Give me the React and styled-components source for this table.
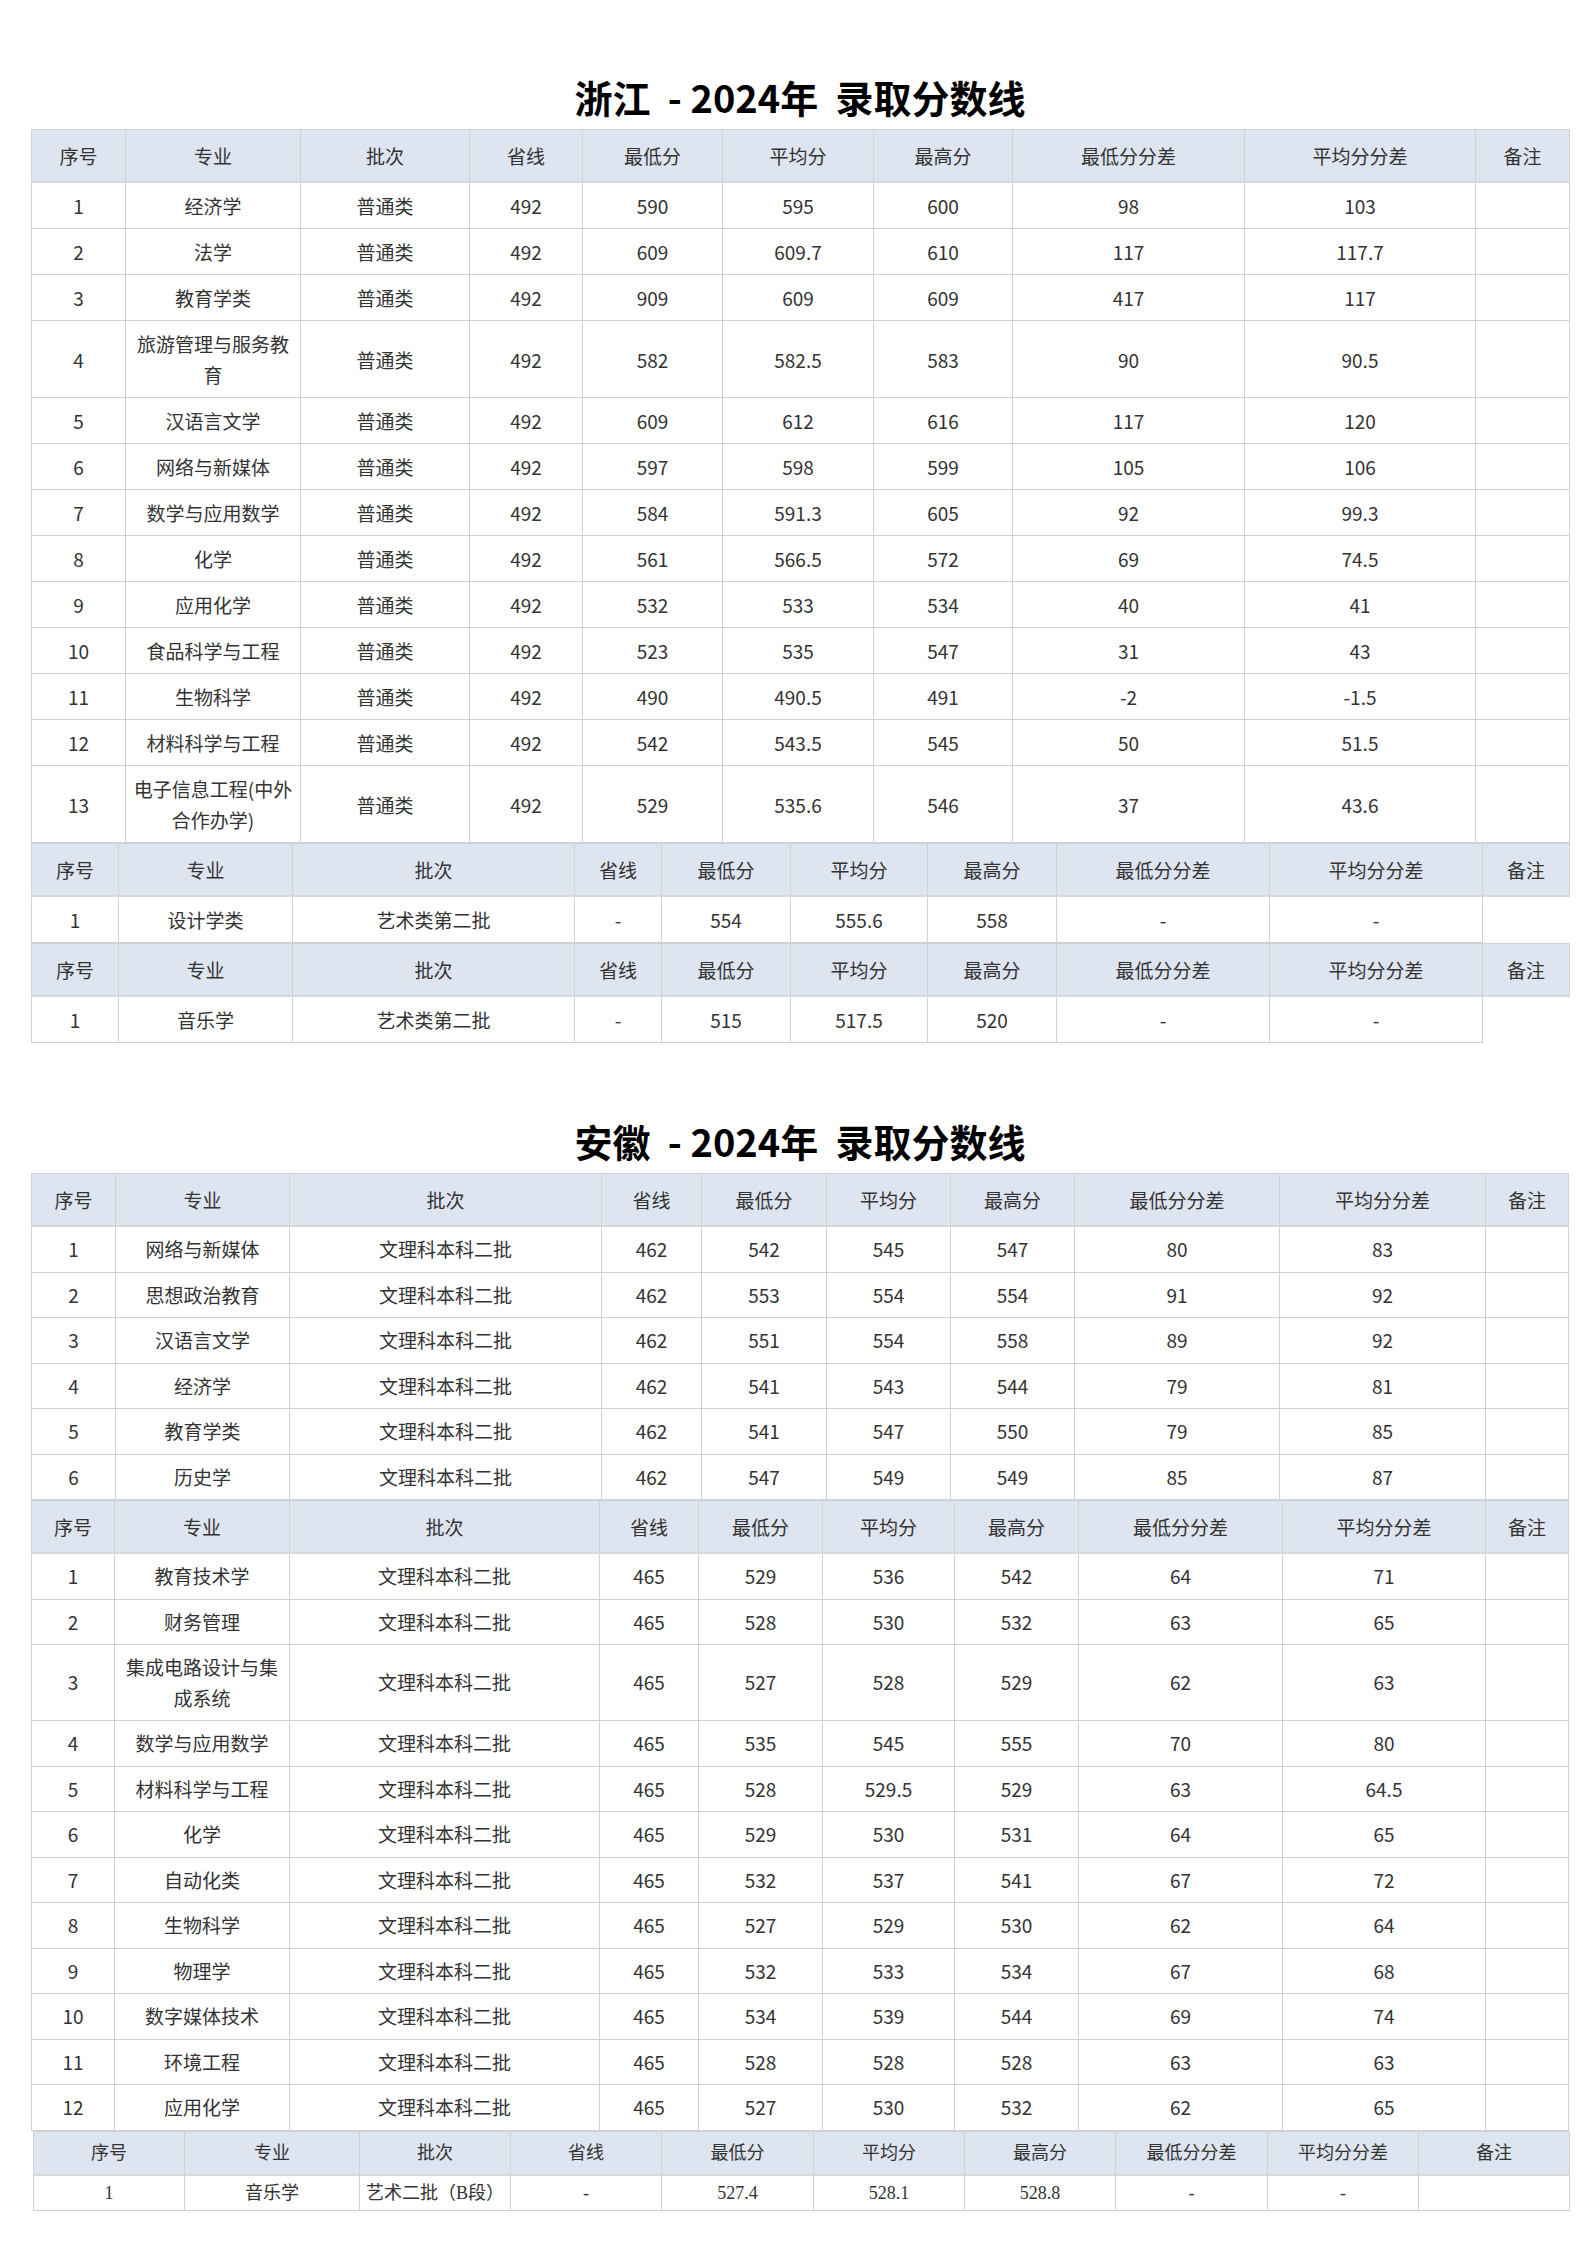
import React from 'react';
import styled, { createGlobalStyle } from 'styled-components';

const HEADERS = ['序号', '专业', '批次', '省线', '最低分', '平均分', '最高分', '最低分分差', '平均分分差', '备注'];

const zjMain = [
  ['1', '经济学', '普通类', '492', '590', '595', '600', '98', '103'],
  ['2', '法学', '普通类', '492', '609', '609.7', '610', '117', '117.7'],
  ['3', '教育学类', '普通类', '492', '909', '609', '609', '417', '117'],
  ['4', '旅游管理与服务教育', '普通类', '492', '582', '582.5', '583', '90', '90.5'],
  ['5', '汉语言文学', '普通类', '492', '609', '612', '616', '117', '120'],
  ['6', '网络与新媒体', '普通类', '492', '597', '598', '599', '105', '106'],
  ['7', '数学与应用数学', '普通类', '492', '584', '591.3', '605', '92', '99.3'],
  ['8', '化学', '普通类', '492', '561', '566.5', '572', '69', '74.5'],
  ['9', '应用化学', '普通类', '492', '532', '533', '534', '40', '41'],
  ['10', '食品科学与工程', '普通类', '492', '523', '535', '547', '31', '43'],
  ['11', '生物科学', '普通类', '492', '490', '490.5', '491', '-2', '-1.5'],
  ['12', '材料科学与工程', '普通类', '492', '542', '543.5', '545', '50', '51.5'],
  ['13', '电子信息工程(中外合作办学)', '普通类', '492', '529', '535.6', '546', '37', '43.6'],
];

const zjDesign = [['1', '设计学类', '艺术类第二批', '-', '554', '555.6', '558', '-', '-']];
const zjMusic = [['1', '音乐学', '艺术类第二批', '-', '515', '517.5', '520', '-', '-']];

const ahFirst = [
  ['1', '网络与新媒体', '文理科本科二批', '462', '542', '545', '547', '80', '83'],
  ['2', '思想政治教育', '文理科本科二批', '462', '553', '554', '554', '91', '92'],
  ['3', '汉语言文学', '文理科本科二批', '462', '551', '554', '558', '89', '92'],
  ['4', '经济学', '文理科本科二批', '462', '541', '543', '544', '79', '81'],
  ['5', '教育学类', '文理科本科二批', '462', '541', '547', '550', '79', '85'],
  ['6', '历史学', '文理科本科二批', '462', '547', '549', '549', '85', '87'],
];

const ahSecond = [
  ['1', '教育技术学', '文理科本科二批', '465', '529', '536', '542', '64', '71'],
  ['2', '财务管理', '文理科本科二批', '465', '528', '530', '532', '63', '65'],
  ['3', '集成电路设计与集成系统', '文理科本科二批', '465', '527', '528', '529', '62', '63'],
  ['4', '数学与应用数学', '文理科本科二批', '465', '535', '545', '555', '70', '80'],
  ['5', '材料科学与工程', '文理科本科二批', '465', '528', '529.5', '529', '63', '64.5'],
  ['6', '化学', '文理科本科二批', '465', '529', '530', '531', '64', '65'],
  ['7', '自动化类', '文理科本科二批', '465', '532', '537', '541', '67', '72'],
  ['8', '生物科学', '文理科本科二批', '465', '527', '529', '530', '62', '64'],
  ['9', '物理学', '文理科本科二批', '465', '532', '533', '534', '67', '68'],
  ['10', '数字媒体技术', '文理科本科二批', '465', '534', '539', '544', '69', '74'],
  ['11', '环境工程', '文理科本科二批', '465', '528', '528', '528', '63', '63'],
  ['12', '应用化学', '文理科本科二批', '465', '527', '530', '532', '62', '65'],
];

const ahMusic = [['1', '音乐学', '艺术二批（B段）', '-', '527.4', '528.1', '528.8', '-', '-']];

// column widths measured off the screenshot
const COLS_ZJ = [94, 175, 169, 113, 140, 151, 139, 232, 231, 94];
const COLS_ZJ_ART = [87, 174, 282, 87, 129, 137, 129, 213, 213, 87];
const COLS_AH1 = [84, 174, 312, 100, 125, 124, 124, 205, 206, 83];
const COLS_AH2 = [83, 175, 310, 99, 124, 132, 124, 204, 203, 83];
const COLS_AH_ART = [151, 175, 151, 151, 152, 151, 151, 152, 151, 151];

const ScoreTable = ({ cols, rows, noNote, serif, compact }) => (
  <Table $serif={serif}>
    <colgroup>
      {cols.map((w, i) => <col key={i} style={{ width: w }} />)}
    </colgroup>
    <thead>
      <tr>
        {HEADERS.map(h => <HeadCell key={h} $serif={serif}>{h}</HeadCell>)}
      </tr>
    </thead>
    <tbody>
      {rows.map(r => (
        <tr key={r[0] + r[1]}>
          {r.map((c, i) => <Cell key={i} $serif={serif} $compact={compact}>{c}</Cell>)}
          {noNote ? null : <Cell $serif={serif} $compact={compact}></Cell>}
        </tr>
      ))}
    </tbody>
  </Table>
);

const App = () => {
  return (
    <Page>
      <GlobalStyle />
      <Section>
        <Title>浙江&nbsp; - 2024年&nbsp; 录取分数线</Title>
        <ScoreTable cols={COLS_ZJ} rows={zjMain} />
        <ScoreTable cols={COLS_ZJ_ART} rows={zjDesign} noNote />
        <ScoreTable cols={COLS_ZJ_ART} rows={zjMusic} noNote />
      </Section>
      <Section $gap>
        <Title>安徽&nbsp; - 2024年&nbsp; 录取分数线</Title>
        <ScoreTable cols={COLS_AH1} rows={ahFirst} compact />
        <ScoreTable cols={COLS_AH2} rows={ahSecond} compact />
        <SerifWrap>
          <ScoreTable cols={COLS_AH_ART} rows={ahMusic} serif />
        </SerifWrap>
      </Section>
    </Page>
  );
};

export default App;

const GlobalStyle = createGlobalStyle`
  body {
    margin: 0;
    background: #fff;
    color: #333;
    font-family: "Noto Sans CJK SC", "Noto Sans", sans-serif;
  }
`;
const Page = styled.div`
  width: 1587px;
  padding: 71px 0 40px;
  box-sizing: border-box;
`;
const Section = styled.section`
  margin-left: 31px;
  width: 1538px;
  margin-top: ${p => (p.$gap ? '72px' : '0')};
`;
const Title = styled.h2`
  margin: 0 0 6px;
  text-align: center;
  font-size: 38px;
  line-height: 52px;
  font-weight: 700;
  color: #000;
  white-space: pre;
`;
const SerifWrap = styled.div`
  padding-left: 2px;
`;
const Table = styled.table`
  width: 100%;
  table-layout: fixed;
  border-collapse: collapse;
  font-family: ${p => (p.$serif
    ? '"Liberation Serif", "Noto Sans CJK SC", serif'
    : '"Noto Sans CJK SC", "Noto Sans", sans-serif')};
`;
const HeadCell = styled.th`
  background: #dee4f0;
  border: 1px solid #d2d2d2;
  border-bottom: 2px solid #d8d8d8;
  font-weight: 400;
  font-size: ${p => (p.$serif ? '18px' : '19px')};
  line-height: ${p => (p.$serif ? '26px' : '31px')};
  padding: ${p => (p.$serif ? '8px 6px' : '10px 6px')};
  color: #333;
  text-align: center;
`;
const Cell = styled.td`
  border: 1px solid #d2d2d2;
  font-size: ${p => (p.$serif ? '18px' : '19px')};
  line-height: ${p => (p.$serif ? '26px' : p.$compact ? '30.5px' : '31px')};
  padding: ${p => (p.$serif ? '4px 6px' : '7px 4px')};
  color: #333;
  text-align: center;
  vertical-align: middle;
  word-break: break-all;
`;
